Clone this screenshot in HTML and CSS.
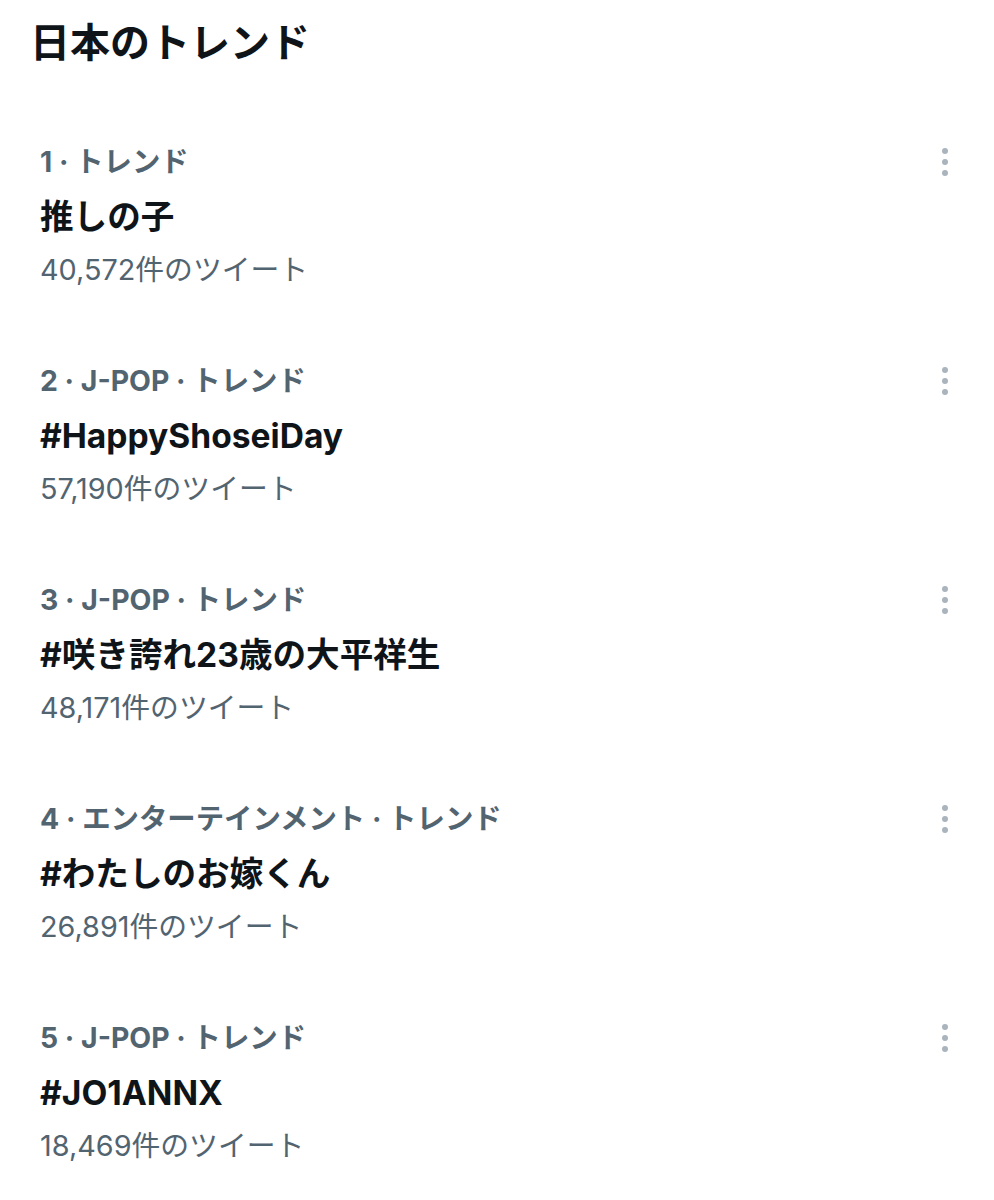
FILE: index.html
```html
<!DOCTYPE html>
<html lang="ja">
<head>
<meta charset="utf-8">
<link rel="stylesheet" href="styles.css">
</head>
<body>
<main class="page">
  <h1 class="heading">日本のトレンド</h1>
  <ul class="trends">
    <li class="trend">
      <div class="info">
        <div class="meta">1 · トレンド</div>
        <div class="name">推しの子</div>
        <div class="count">40,572件のツイート</div>
      </div>
      <svg class="more" viewBox="0 0 20 30" width="20" height="30"><circle cx="10" cy="4" r="3"/><circle cx="10" cy="15" r="3"/><circle cx="10" cy="26" r="3"/></svg>
    </li>
    <li class="trend">
      <div class="info">
        <div class="meta">2 · J-POP · トレンド</div>
        <div class="name">#HappyShoseiDay</div>
        <div class="count">57,190件のツイート</div>
      </div>
      <svg class="more" viewBox="0 0 20 30" width="20" height="30"><circle cx="10" cy="4" r="3"/><circle cx="10" cy="15" r="3"/><circle cx="10" cy="26" r="3"/></svg>
    </li>
    <li class="trend">
      <div class="info">
        <div class="meta">3 · J-POP · トレンド</div>
        <div class="name">#咲き誇れ23歳の大平祥生</div>
        <div class="count">48,171件のツイート</div>
      </div>
      <svg class="more" viewBox="0 0 20 30" width="20" height="30"><circle cx="10" cy="4" r="3"/><circle cx="10" cy="15" r="3"/><circle cx="10" cy="26" r="3"/></svg>
    </li>
    <li class="trend">
      <div class="info">
        <div class="meta">4 · エンターテインメント · トレンド</div>
        <div class="name">#わたしのお嫁くん</div>
        <div class="count">26,891件のツイート</div>
      </div>
      <svg class="more" viewBox="0 0 20 30" width="20" height="30"><circle cx="10" cy="4" r="3"/><circle cx="10" cy="15" r="3"/><circle cx="10" cy="26" r="3"/></svg>
    </li>
    <li class="trend">
      <div class="info">
        <div class="meta">5 · J-POP · トレンド</div>
        <div class="name">#JO1ANNX</div>
        <div class="count">18,469件のツイート</div>
      </div>
      <svg class="more" viewBox="0 0 20 30" width="20" height="30"><circle cx="10" cy="4" r="3"/><circle cx="10" cy="15" r="3"/><circle cx="10" cy="26" r="3"/></svg>
    </li>
  </ul>
</main>
</body>
</html>
```
FILE: styles.css
```css
html, body {
  margin: 0;
  padding: 0;
  background: #ffffff;
}
body {
  font-family: "Inter", "Noto Sans CJK JP", sans-serif;
  color: #0f1419;
}
.page {
  padding: 18px 39px 0 40px;
}
.heading {
  margin: 0 0 0 -10px;
  font-size: 40px;
  line-height: 50px;
  font-weight: 700;
  color: #0f1419;
}
.trends {
  list-style: none;
  margin: 76px 0 0;
  padding: 0;
  display: flex;
  flex-direction: column;
  gap: 75px;
}
.trend {
  display: flex;
  justify-content: space-between;
  align-items: flex-start;
}
.info {
  display: flex;
  flex-direction: column;
}
.meta {
  font-size: 28.4px;
  line-height: 36px;
  font-weight: 700;
  color: #536471;
}
.name {
  margin-top: 15px;
  font-size: 33.6px;
  line-height: 44px;
  font-weight: 700;
  color: #0f1419;
}
.count {
  margin-top: 13px;
  font-size: 28.8px;
  line-height: 36px;
  color: #536471;
}
.more {
  margin-top: 3px;
  fill: #aab4bd;
  flex: none;
}
```
